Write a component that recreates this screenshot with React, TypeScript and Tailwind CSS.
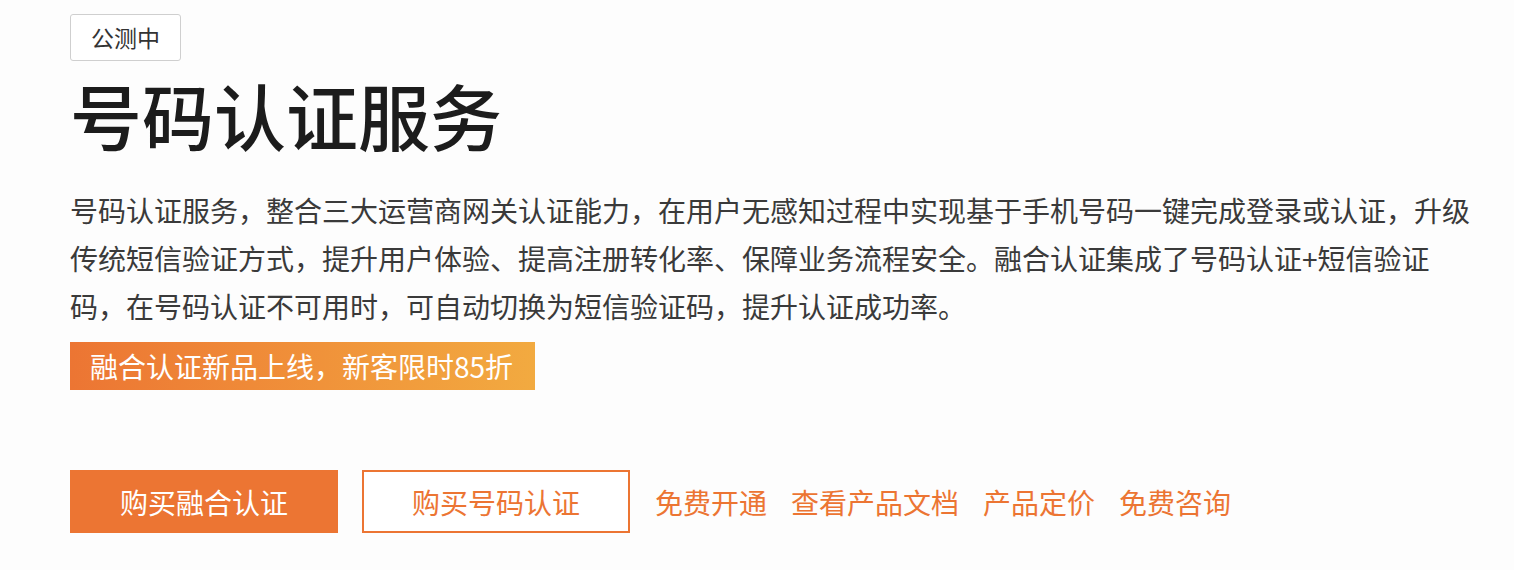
const font = { fontFamily: '"Noto Sans CJK SC", "Noto Sans", sans-serif' }

const links = ['免费开通', '查看产品文档', '产品定价', '免费咨询']

export default function App() {
  return (
    <div style={font} className="min-h-[570px] bg-[#fdfdfd] pl-[70px] pt-[14px]">
      <div className="flex h-[47px] w-[111px] items-center justify-center rounded-[3px] border border-[#cfcfcf] bg-white text-[23px] text-[#333]">
        公测中
      </div>
      <h1 className="mt-[17px] text-[72px] font-medium leading-[72px] text-[#1c1c1c]">号码认证服务</h1>
      <p className="mt-[36px] w-[1400px] text-[28px] leading-[48px] text-[#3a3a3a]">
        号码认证服务，整合三大运营商网关认证能力，在用户无感知过程中实现基于手机号码一键完成登录或认证，升级传统短信验证方式，提升用户体验、提高注册转化率、保障业务流程安全。融合认证集成了号码认证+短信验证码，在号码认证不可用时，可自动切换为短信验证码，提升认证成功率。
      </p>
      <div className="mt-[12px] inline-flex h-[48px] items-center bg-gradient-to-r from-[#ec7533] to-[#f2aa40] pl-[20px] pr-[22px] text-[28px] text-white">
        融合认证新品上线，新客限时85折
      </div>
      <div className="mt-[80px] flex items-center">
        <button className="flex h-[63px] w-[268px] items-center justify-center bg-[#ec7533] text-[28px] text-white">
          购买融合认证
        </button>
        <button className="ml-[24px] flex h-[63px] w-[268px] items-center justify-center border-2 border-[#ec7533] bg-white text-[28px] text-[#ec7533]">
          购买号码认证
        </button>
        <div className="ml-[25px] flex items-center gap-[24px]">
          {links.map((l) => (
            <a key={l} className="cursor-pointer text-[28px] text-[#ec7533]">
              {l}
            </a>
          ))}
        </div>
      </div>
    </div>
  )
}
